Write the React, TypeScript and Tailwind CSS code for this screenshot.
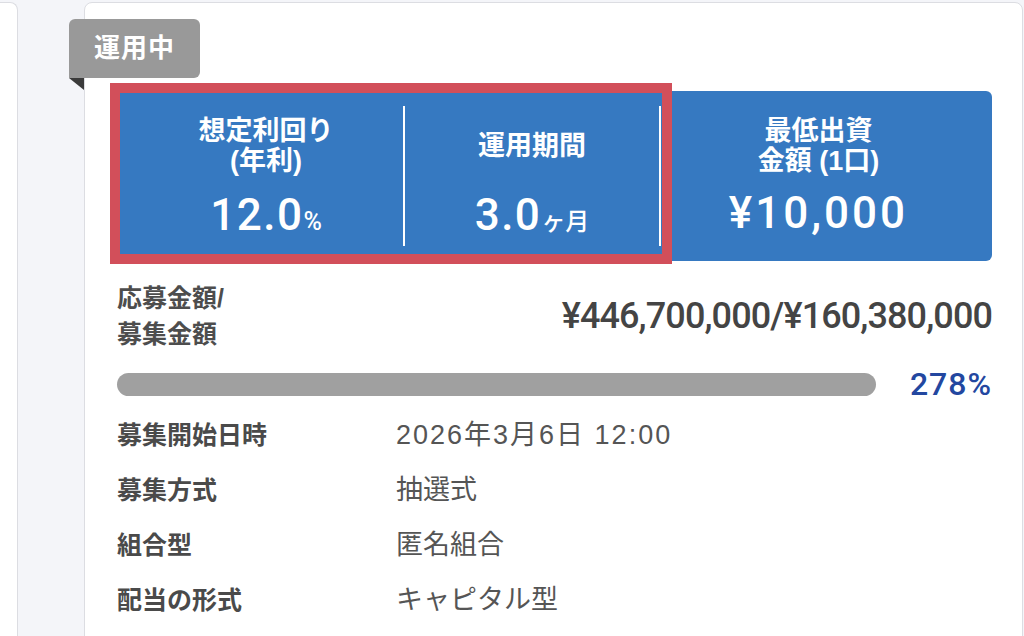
export default function App() {
  const rows: [string, string, string][] = [
    ["募集開始日時", "2026年3月6日 12:00", "tracking-[2px]"],
    ["募集方式", "抽選式", ""],
    ["組合型", "匿名組合", ""],
    ["配当の形式", "キャピタル型", ""],
  ];
  return (
    <div className="flex h-[636px] w-[1024px] overflow-hidden bg-[#f4f5f9] font-['Liberation_Sans','Noto_Sans_CJK_JP',sans-serif]">
      <div className="mt-[2px] h-[640px] w-[18px] shrink-0 rounded-tr-lg border-r border-t border-[#dcdde2] bg-white" />
      <div className="relative ml-[66px] mt-[2px] h-[640px] w-[939px] shrink-0 rounded-t-lg border border-[#dcdde2] bg-white pl-[28px] pr-[30px] pt-[88px]">
        {/* badge */}
        <div className="absolute left-[-16px] top-[16px] flex h-[59px] w-[131px] items-center justify-center rounded-t-md rounded-br-md bg-[#999999] text-[26px] font-bold tracking-[1px] text-white">
          運用中
        </div>
        <svg className="absolute left-[-16px] top-[75px]" width="15" height="12" viewBox="0 0 15 12">
          <polygon points="0,0 15,0 15,12" fill="#3b3b3b" />
        </svg>

        {/* blue panel */}
        <div className="flex h-[170px] rounded-md bg-[#3679c1] text-white">
          <div className="flex w-[290px] flex-col items-center pl-[16px] pt-[23px]">
            <div className="flex h-[64px] flex-col items-center justify-center text-[27px] font-bold leading-[30px]">
              <span>想定利回り</span>
              <span>(年利)</span>
            </div>
            <div className="mt-[13px] flex h-[48px] items-baseline font-['Roboto',sans-serif] font-medium leading-[48px]">
              <span className="text-[44px] tracking-[1.5px]">12.0</span>
              <span className="text-[25px]">%</span>
            </div>
          </div>
          <div className="my-[15px] w-[2px] bg-white" />
          <div className="flex w-[254px] flex-col items-center pt-[23px]">
            <div className="flex h-[64px] flex-col items-center justify-center text-[27px] font-bold leading-[30px]">
              <span>運用期間</span>
            </div>
            <div className="mt-[13px] flex h-[48px] items-baseline leading-[48px]">
              <span className="font-['Roboto',sans-serif] text-[44px] font-medium tracking-[1.5px]">3.0</span>
              <span className="text-[24px] font-medium">ヶ月</span>
            </div>
          </div>
          <div className="my-[15px] w-[2px] bg-white" />
          <div className="flex flex-1 flex-col items-center pr-[16px] pt-[23px]">
            <div className="flex h-[64px] flex-col items-center justify-center text-[27px] font-bold leading-[30px]">
              <span>最低出資</span>
              <span>金額 (1口)</span>
            </div>
            <div className="mt-[11px] flex h-[48px] items-baseline font-['Roboto',sans-serif] font-medium leading-[48px]">
              <span className="text-[44px] tracking-[3px]">¥10,000</span>
            </div>
          </div>
        </div>

        {/* red highlight */}
        <div className="absolute left-[25px] top-[80px] h-[181px] w-[562px] border-[10px] border-[#d24f5a]" />

        {/* amount */}
        <div className="mt-[19px] flex items-center justify-between">
          <div className="flex flex-col pl-[4px] text-[25px] font-bold leading-[36px] text-[#4d4d4d]">
            <span>応募金額/</span>
            <span>募集金額</span>
          </div>
          <div className="font-['Roboto',sans-serif] text-[36px] font-medium leading-[40px] tracking-[-0.9px] text-[#444444]">
            ¥446,700,000/¥160,380,000
          </div>
        </div>

        {/* progress */}
        <div className="mt-[21px] flex items-center gap-[34px] pl-[4px]">
          <div className="h-[23px] flex-1 rounded-full bg-[#a0a0a0]" />
          <div className="font-['Roboto',sans-serif] text-[32px] font-medium leading-[23px] tracking-[1px] text-[#2347a0]">278%</div>
        </div>

        {/* rows */}
        <div className="mt-[12px] flex flex-col pl-[4px]">
          {rows.map(([k, v, t]) => (
            <div key={k} className="flex h-[55px] items-center">
              <div className="w-[279px] shrink-0 text-[25px] font-bold text-[#4a4a4a]">{k}</div>
              <div className={`text-[27px] text-[#555555] ${t}`}>{v}</div>
            </div>
          ))}
        </div>
      </div>
    </div>
  );
}
